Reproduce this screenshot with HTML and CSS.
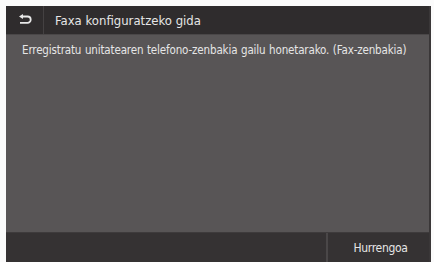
FILE: index.html
```html
<!DOCTYPE html>
<html>
<head>
<meta charset="utf-8">
<link rel="stylesheet" href="styles.css">
</head>
<body>
<div class="screen">
  <div class="header">
    <div class="back">
      <svg width="14" height="12" viewBox="0 0 14 12"><path d="M4 2.5 H9.5 A3.2 3.2 0 0 1 9.5 8.9 H2" fill="none" stroke="#e8e8e8" stroke-width="1.8"/><path d="M1 2.5 L5 0 L5 5 Z" fill="#e8e8e8"/></svg>
    </div>
    <div class="title">Faxa konfiguratzeko gida</div>
  </div>
  <div class="content">
    <p class="msg">Erregistratu unitatearen telefono-zenbakia gailu honetarako. (Fax-zenbakia)</p>
  </div>
  <div class="footer">
    <div class="spacer"></div>
    <div class="next">Hurrengoa</div>
  </div>
</div>
</body>
</html>
```
FILE: styles.css
```css
html, body { margin: 0; padding: 0; background: #fbfbfb; }
body { padding: 6px 3px 0 6px; height: 262px; box-sizing: border-box; overflow: hidden; }
.screen {
  height: 256px;
  display: flex;
  flex-direction: column;
  background: #585556;
  font-family: "DejaVu Sans Condensed", "DejaVu Sans", sans-serif;
  color: #e6e6e6;
  border-right: 2px solid #3a3738;
}
.header {
  height: 28px;
  display: flex;
  align-items: stretch;
  background: #2f2c2d;
  border-bottom: 1px solid #4a4748;
}
.back {
  width: 37px;
  display: flex;
  align-items: center;
  justify-content: center;
  border-right: 1px solid #444142;
}
.title {
  padding-left: 11px;
  display: flex;
  align-items: center;
  font-size: 13px;
  letter-spacing: 0px;
}
.content { flex: 1; padding: 8px 0 0 16px; }
.msg { margin: 0; font-size: 11.5px; letter-spacing: -0.15px; word-spacing: 0.5px; }
.footer {
  height: 29px;
  display: flex;
  background: #353233;
  border-top: 1px solid #3e3b3c;
}
.spacer { flex: 1; border-right: 2px solid #4a4748; }
.next {
  width: 101px;
  display: flex;
  align-items: center;
  justify-content: center;
  padding-left: 4px;
  box-sizing: border-box;
  font-size: 12px;
  letter-spacing: -0.3px;
}
```
